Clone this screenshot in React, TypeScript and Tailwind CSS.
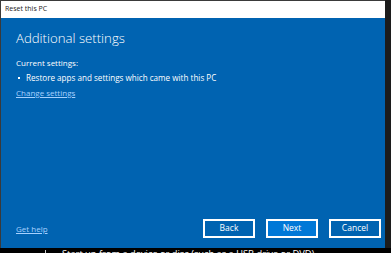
export default function App() {
  return (
    <div className="w-[391px] h-[253px] bg-[#1c1c1c] flex flex-col overflow-hidden font-['Open_Sans',sans-serif]">
      <div className="flex h-[248px] shrink-0">
        <div className="w-[385px] flex flex-col border-l border-t border-[#3a3a3a]">
          <div className="h-[17px] bg-white flex items-center pl-[4px] text-[7px] text-[#222]">
            Reset this PC
          </div>
          <div className="flex-1 bg-[#0063b1] text-white flex flex-col px-[15px] pt-[11px] pb-[10px]">
            <h1 className="text-[13.2px] font-light leading-[18px]">Additional settings</h1>
            <p className="text-[8px] mt-[10px] leading-[11px]">Current settings:</p>
            <div className="flex items-center text-[8.1px] mt-[4px] leading-[11px]">
              <span className="w-[2px] h-[2px] bg-white ml-[2px] mr-[6px]" />
              Restore apps and settings which came with this PC
            </div>
            <a href="#" className="text-[8px] mt-[4px] leading-[11px] text-[#a6d1ff] underline w-fit">
              Change settings
            </a>
            <div className="flex-1" />
            <div className="flex items-center">
              <a href="#" className="text-[8px] text-[#a6d1ff] underline">Get help</a>
              <div className="flex-1" />
              <div className="flex gap-[11px] mr-[-11px]">
                <button className="w-[52px] h-[19px] border-2 border-white text-[8.5px] text-white">Back</button>
                <button className="w-[52px] h-[19px] border-2 border-white bg-[#0078d7] text-[8.5px] text-white">Next</button>
                <button className="w-[52px] h-[19px] border-2 border-white text-[8.5px] text-white">Cancel</button>
              </div>
            </div>
          </div>
        </div>
        <div className="flex-1 bg-[#1c1c1c]" />
      </div>
      <div className="flex-1 bg-black text-white text-[9.3px] leading-[10px] whitespace-nowrap flex">
        <span className="w-[1px] h-[4px] bg-[#ccc] ml-[45px] mt-[2px]" />
        <span className="ml-[16px] mt-[1px]">Start up from a device or disc (such as a USB drive or DVD)</span>
      </div>
    </div>
  )
}
